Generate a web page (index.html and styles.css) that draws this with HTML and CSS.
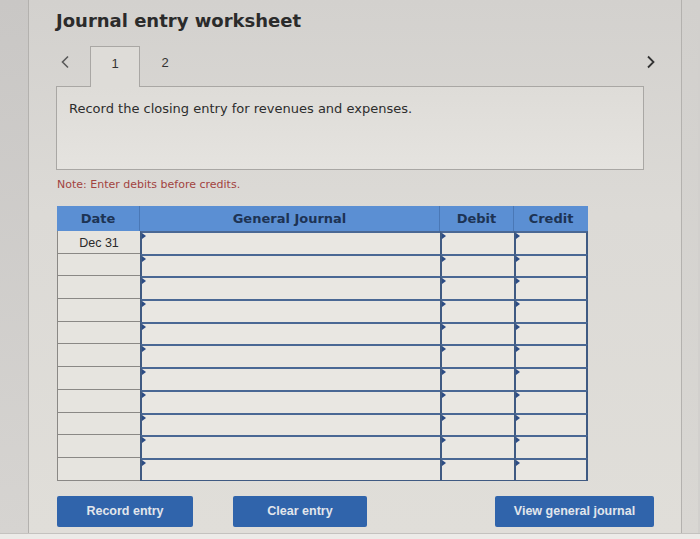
FILE: index.html
```html
<!DOCTYPE html>
<html lang="en">
<head>
<meta charset="utf-8">
<title>Journal entry worksheet</title>
<link rel="stylesheet" href="styles.css">
</head>
<body>
<div class="screen">
  <div class="side"></div>
  <main class="panel">
    <h1 class="title">Journal entry worksheet</h1>
    <div class="tabs">
      <span class="nav prev"><svg width="10" height="14" viewBox="0 0 10 14"><path d="M8 1.5 L2.5 7 L8 12.5" fill="none" stroke="#5a5a5a" stroke-width="1.6"/></svg></span>
      <div class="tab active">1</div>
      <div class="tab">2</div>
      <span class="nav next"><svg width="10" height="14" viewBox="0 0 10 14"><path d="M2 1.5 L7.5 7 L2 12.5" fill="none" stroke="#333" stroke-width="1.8"/></svg></span>
    </div>
    <div class="prompt">Record the closing entry for revenues and expenses.</div>
    <p class="note">Note: Enter debits before credits.</p>
    <div class="journal">
      <div class="th">Date</div>
      <div class="th">General Journal</div>
      <div class="th">Debit</div>
      <div class="th last">Credit</div>

      <div class="date">Dec 31</div><div class="cell gj"></div><div class="cell"></div><div class="cell end"></div>
      <div class="date"></div><div class="cell gj"></div><div class="cell"></div><div class="cell end"></div>
      <div class="date"></div><div class="cell gj"></div><div class="cell"></div><div class="cell end"></div>
      <div class="date"></div><div class="cell gj"></div><div class="cell"></div><div class="cell end"></div>
      <div class="date"></div><div class="cell gj"></div><div class="cell"></div><div class="cell end"></div>
      <div class="date"></div><div class="cell gj"></div><div class="cell"></div><div class="cell end"></div>
      <div class="date"></div><div class="cell gj"></div><div class="cell"></div><div class="cell end"></div>
      <div class="date"></div><div class="cell gj"></div><div class="cell"></div><div class="cell end"></div>
      <div class="date"></div><div class="cell gj"></div><div class="cell"></div><div class="cell end"></div>
      <div class="date"></div><div class="cell gj"></div><div class="cell"></div><div class="cell end"></div>
      <div class="date lastrow"></div><div class="cell gj lastrow"></div><div class="cell lastrow"></div><div class="cell end lastrow"></div>
    </div>
    <div class="actions">
      <button class="btn record">Record entry</button>
      <button class="btn clear">Clear entry</button>
      <button class="btn view">View general journal</button>
    </div>
  </main>
  <div class="side right"></div>
</div>
<div class="bottom"></div>
</body>
</html>
```

FILE: styles.css
```css
html, body {
  margin: 0;
  padding: 0;
  background: #d2d0cd;
}
body {
  width: 700px;
  height: 539px;
  overflow: hidden;
  font-family: "DejaVu Sans", Verdana, sans-serif;
}
.screen {
  display: flex;
  height: 533px;
}
.side {
  width: 28px;
  background: linear-gradient(to bottom, #c9c7c5, #d6d4d1);
}
.side.right {
  width: 16px;
  background: linear-gradient(to bottom, #d2d0cd, #d9d7d3);
}
.panel {
  width: 654px;
  border-left: 1px solid #b3b1ae;
  border-right: 1px solid #b3b1ae;
  padding-left: 27px;
  box-sizing: border-box;
  background: linear-gradient(to bottom, #d3d1ce 0%, #dcdad6 40%, #e0ded9 100%);
}
.bottom {
  height: 6px;
  background: #ecebe8;
  border-top: 1px solid #c4c2bf;
}
.title {
  margin: 0;
  padding-top: 10px;
  font-size: 18px;
  line-height: 22px;
  font-weight: bold;
  color: #2b2b2b;
}
.tabs {
  display: flex;
  align-items: flex-start;
  margin-top: 14px;
  height: 40px;
  width: 600px;
}
.nav {
  display: block;
  margin-top: 9px;
  width: 10px;
  height: 14px;
}
.nav svg { display: block; }
.prev {
  margin-left: 4px;
  margin-right: 20px;
}
.next {
  margin-left: auto;
}
.tab {
  width: 50px;
  height: 40px;
  box-sizing: border-box;
  padding-top: 9px;
  text-align: center;
  font-family: "Liberation Sans", Arial, sans-serif;
  font-size: 13px;
  line-height: 15px;
  color: #333;
}
.tab.active {
  border: 1px solid #a9a7a4;
  border-bottom: none;
  background: #dedcd8;
  height: 41px;
  margin-bottom: -1px;
  position: relative;
  z-index: 1;
}
.prompt {
  width: 588px;
  height: 84px;
  box-sizing: border-box;
  border: 1px solid #a9a7a4;
  background: linear-gradient(to bottom, #dedcd8, #e5e3df);
  padding: 14px 12px 0;
  font-size: 13px;
  line-height: 16px;
  color: #2d2d2d;
}
.note {
  margin: 8px 0 0 1px;
  font-size: 11px;
  line-height: 14px;
  color: #a2433f;
}
.journal {
  margin: 14px 0 0 1px;
  display: grid;
  grid-template-columns: 83px 300px 74px 74px;
  grid-auto-rows: 22.7px;
  grid-template-rows: 25px;
  width: 531px;
}
.th {
  background: #5b8fd3;
  border-right: 1px solid #4a78b6;
  color: #1d3354;
  font-weight: bold;
  font-size: 13px;
  line-height: 25px;
  text-align: center;
}
.th.last { border-right: none; }
.date {
  border-left: 1px solid #8a8885;
  border-bottom: 1px solid #8a8885;
  background: #e6e4df;
  font-family: "Liberation Sans", Arial, sans-serif;
  font-size: 12.5px;
  line-height: 24px;
  text-align: center;
  color: #2a2a2a;
}
.cell {
  position: relative;
  background: #e9e7e2;
  border-left: 2px solid #3f5a82;
  border-top: 2px solid #4a6894;
  box-sizing: border-box;
}
.cell.end {
  border-right: 2px solid #3f5a82;
}
.cell.lastrow {
  border-bottom: 1px solid #3f5a82;
}
.cell::before {
  content: "";
  position: absolute;
  left: 0;
  top: 0;
  border-top: 3px solid transparent;
  border-bottom: 3px solid transparent;
  border-left: 4px solid #2c4c84;
}
.actions {
  display: flex;
  margin-top: 15px;
  height: 31px;
}
.btn {
  height: 31px;
  border: none;
  border-radius: 2px;
  background: #3064ab;
  color: #e2e6ec;
  font-family: "Liberation Sans", Arial, sans-serif;
  font-weight: bold;
  font-size: 12.5px;
  padding: 0;
}
.record { width: 136px; margin-left: 1px; }
.clear { width: 134px; margin-left: 40px; }
.view { width: 159px; margin-left: 128px; }
```
